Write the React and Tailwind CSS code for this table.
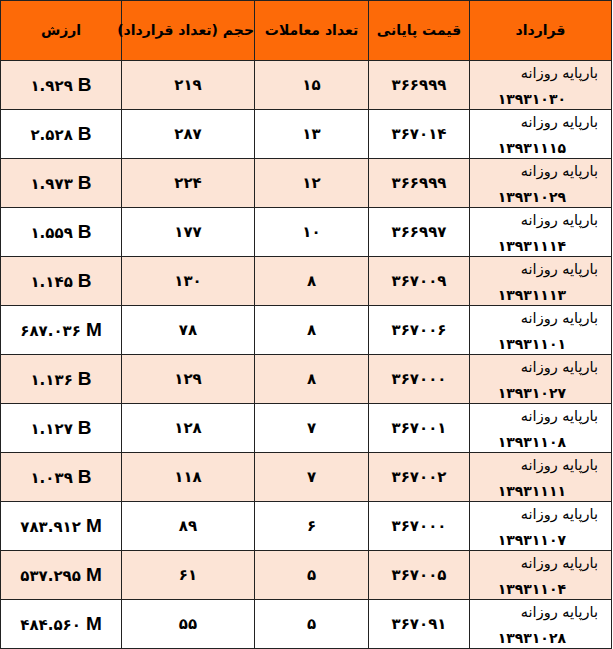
import React from 'react';

const toFa = (s) => String(s).replace(/[0-9]/g, (d) => '۰۱۲۳۴۵۶۷۸۹'[d]);

const rows = [
  ['1.929', 'B', '219', '15', '366999', '13931030'],
  ['2.528', 'B', '287', '13', '367014', '13931115'],
  ['1.973', 'B', '224', '12', '366999', '13931029'],
  ['1.559', 'B', '177', '10', '366997', '13931114'],
  ['1.145', 'B', '130', '8', '367009', '13931113'],
  ['687.036', 'M', '78', '8', '367006', '13931101'],
  ['1.136', 'B', '129', '8', '367000', '13931027'],
  ['1.127', 'B', '128', '7', '367001', '13931108'],
  ['1.039', 'B', '118', '7', '367002', '13931111'],
  ['783.912', 'M', '89', '6', '367000', '13931107'],
  ['537.295', 'M', '61', '5', '367005', '13931104'],
  ['484.560', 'M', '55', '5', '367091', '13931028'],
];

const headers = ['قرارداد', 'قیمت پایانی', 'تعداد معاملات', 'حجم (تعداد قرارداد)', 'ارزش'];
const widths = ['w-[142px]', 'w-[101px]', 'w-[114px]', 'w-[133px]', 'w-[121px]'];

const App = () => {
  return (
    <div className="bg-white w-[613px] h-[649px]" style={{ fontFamily: '"DejaVu Sans", sans-serif' }}>
      <table dir="rtl" className="table-fixed border-collapse w-[612px] text-black">
        <thead>
          <tr className="bg-[#fd6a08] h-[60px]">
            {headers.map((h, i) => (
              <th key={i} className={`${widths[i]} border border-[#222] text-center font-bold text-[14px] tracking-[-0.3px] whitespace-nowrap p-0`}>
                {h}
              </th>
            ))}
          </tr>
        </thead>
        <tbody>
          {rows.map((r, idx) => (
            <tr key={idx} className={`h-[49px] ${idx % 2 === 0 ? 'bg-[#fce4d6]' : 'bg-white'}`}>
              <td className="border border-[#222] p-0 align-top text-right">
                <div className="pr-[13px] pt-[1px] text-[14.5px] leading-[22px]">بارپایه روزانه</div>
                <div className="pr-[45px] pt-[5px] font-bold text-[14px] leading-[20px] tracking-[-0.6px]">{toFa(r[5])}</div>
              </td>
              <td className="border border-[#222] text-center font-bold text-[15px] p-0">{toFa(r[4])}</td>
              <td className="border border-[#222] text-center font-bold text-[15px] p-0">{toFa(r[3])}</td>
              <td className="border border-[#222] text-center font-bold text-[15px] p-0">{toFa(r[2])}</td>
              <td className="border border-[#222] text-center p-0">
                <span dir="ltr" className="inline-flex items-baseline gap-[5px]">
                  <span className="font-bold text-[15px]">{toFa(r[0])}</span>
                  <span className="font-bold text-[19px]" style={{ fontFamily: '"Liberation Sans", sans-serif' }}>{r[1]}</span>
                </span>
              </td>
            </tr>
          ))}
        </tbody>
      </table>
    </div>
  );
};

export default App;
